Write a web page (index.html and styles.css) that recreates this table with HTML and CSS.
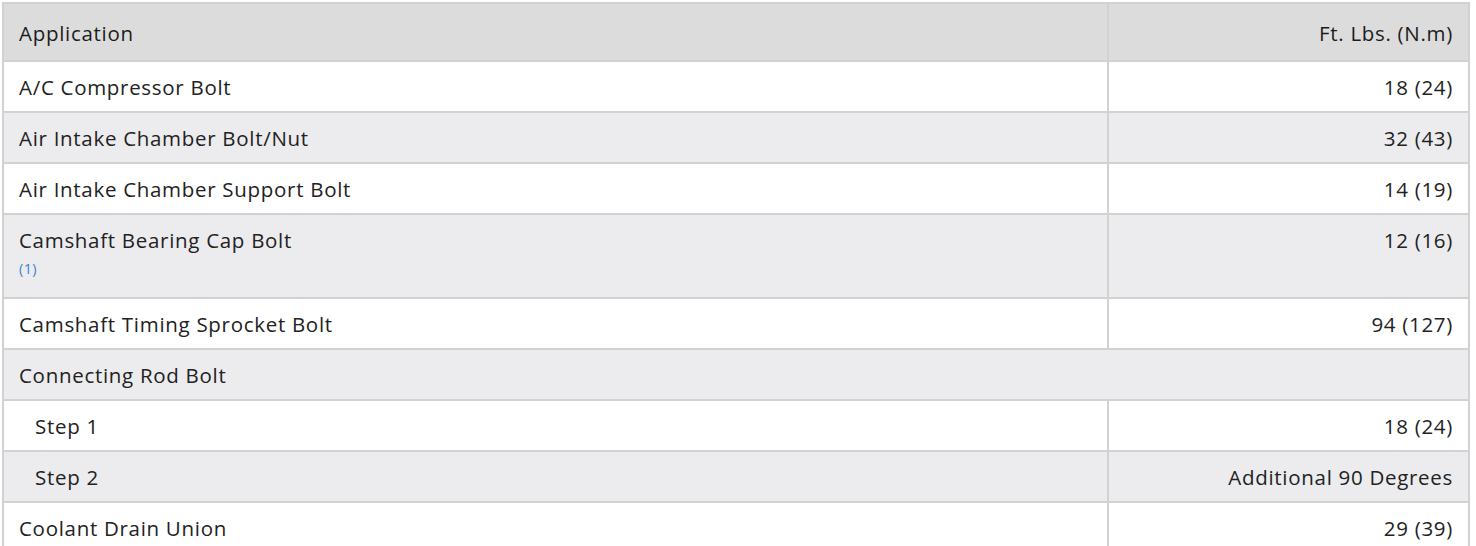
FILE: index.html
```html
<!DOCTYPE html>
<html>
<head>
<meta charset="utf-8">
<link rel="stylesheet" href="styles.css">
</head>
<body>
<table class="spec">
  <colgroup><col class="c-app"><col class="c-val"></colgroup>
  <thead>
    <tr><th class="app">Application</th><th class="val">Ft. Lbs. (N.m)</th></tr>
  </thead>
  <tbody>
    <tr class="w"><td>A/C Compressor Bolt</td><td class="val">18 (24)</td></tr>
    <tr class="g"><td>Air Intake Chamber Bolt/Nut</td><td class="val">32 (43)</td></tr>
    <tr class="w"><td>Air Intake Chamber Support Bolt</td><td class="val">14 (19)</td></tr>
    <tr class="g tall"><td>Camshaft Bearing Cap Bolt<div class="note">(1)</div></td><td class="val">12 (16)</td></tr>
    <tr class="w"><td>Camshaft Timing Sprocket Bolt</td><td class="val">94 (127)</td></tr>
    <tr class="g"><td colspan="2">Connecting Rod Bolt</td></tr>
    <tr class="w"><td class="step">Step 1</td><td class="val">18 (24)</td></tr>
    <tr class="g"><td class="step">Step 2</td><td class="val">Additional 90 Degrees</td></tr>
    <tr class="w"><td>Coolant Drain Union</td><td class="val">29 (39)</td></tr>
  </tbody>
</table>
</body>
</html>
```
FILE: styles.css
```css
html, body {
  margin: 0;
  padding: 0;
  background: #ffffff;
}
body {
  padding: 2px 0 0 2px;
  font-family: "Open Sans", "DejaVu Sans", sans-serif;
  color: #222222;
}
.spec {
  width: 1466px;
  border-collapse: collapse;
  border: 2px solid #d2d2d2;
  font-size: 20.5px;
  letter-spacing: 0.7px;
  table-layout: fixed;
}
.c-app { width: 1105px; }
.c-val { width: 361px; }
.spec th, .spec td {
  border: 2px solid #d2d2d2;
  padding: 13px 15px 12px 15px;
  line-height: 24px;
  text-align: left;
  vertical-align: top;
  font-weight: 400;
}
.spec thead th {
  background: #dcdcdc;
  padding-top: 17px;
  padding-bottom: 15px;
  color: #1c1c1c;
}
.spec .val { text-align: right; }
.spec tr.w td { background: #ffffff; }
.spec tr.g td { background: #ececee; }
.spec td.step { padding-left: 31px; }
.note {
  font-size: 14.5px;
  line-height: 16px;
  letter-spacing: 0.4px;
  color: #3d86cc;
  margin-top: 9px;
  padding-bottom: 8px;
}
```
